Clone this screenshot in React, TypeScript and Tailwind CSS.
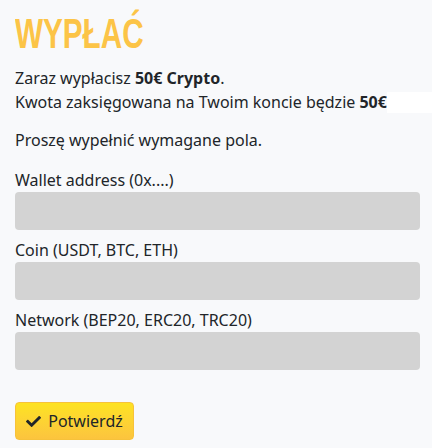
import { FaCheck } from 'react-icons/fa';

const fields = ['Wallet address (0x....)', 'Coin (USDT, BTC, ETH)', 'Network (BEP20, ERC20, TRC20)'];

export default function App() {
  return (
    <div className="min-h-[448px] w-[432px] bg-[#f8f9fb] px-[15px] pt-[8px] text-[16px] leading-[24px] text-[#212529] font-['Noto_Sans',sans-serif]">
      <h1 className="origin-left scale-x-[0.69] text-[43px] font-bold leading-[50px] text-[#fcc447] font-['Liberation_Sans',sans-serif]">
        WYPŁAĆ
      </h1>
      <p className="mt-[8px]">
        Zaraz wypłacisz <strong>50€ Crypto</strong>.
      </p>
      <div className="-mr-[15px] flex items-center">
        <span className="whitespace-nowrap">
          Kwota zaksięgowana na Twoim koncie będzie <strong>50€</strong>
        </span>
        <span className="h-[21px] flex-1 bg-white" />
      </div>
      <p className="mt-[14px]">Proszę wypełnić wymagane pola.</p>
      <form className="mt-[16px] flex flex-col">
        {fields.map((label) => (
          <label key={label} className="mb-[8px] block">
            <span className="block">{label}</span>
            <input className="block h-[38px] w-[405px] rounded-[4px] bg-[#d3d3d3] outline-none" />
          </label>
        ))}
        <button
          type="button"
          className="mt-[24px] flex h-[38px] w-[119px] items-center justify-center gap-[7px] rounded-[4px] border border-[#f7c23a] bg-gradient-to-b from-[#fde320] to-[#fcc43e] text-[16px] text-[#212529]"
        >
          <FaCheck className="h-[15px] w-[15px]" />
          Potwierdź
        </button>
      </form>
    </div>
  );
}
